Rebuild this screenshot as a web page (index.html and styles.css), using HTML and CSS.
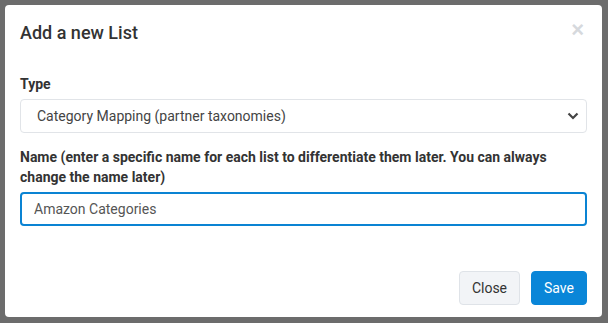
FILE: index.html
```html
<!DOCTYPE html>
<html>

<head>
    <meta charset="UTF-8">
    <meta name="viewport" content="width=device-width, initial-scale=1.0">
    <title>Add a new List</title>
    <link rel="stylesheet" href="styles.css">
</head>

<body>
    <div class="modal">
        <div class="modal-header">
            <h2>Add a new List</h2>
            <button class="close-x">&times;</button>
        </div>
        <div class="modal-body">
            <label for="type">Type</label>
            <div class="select-wrap">
                <select id="type">
                    <option>Category Mapping (partner taxonomies)</option>
                </select>
                <svg class="chevron" width="12" height="8" viewBox="0 0 12 8">
                    <path d="M1.5 1.5 L6 6 L10.5 1.5" fill="none" stroke="#444" stroke-width="2.2" />
                </svg>
            </div>
            <label for="name">Name (enter a specific name for each list to differentiate them later. You can always change the name later)</label>
            <input type="text" id="name" value="Amazon Categories">
        </div>
        <div class="modal-footer">
            <button class="btn btn-light">Close</button>
            <button class="btn btn-primary">Save</button>
        </div>
    </div>
</body>

</html>
```

FILE: styles.css
```css
body {
    margin: 0;
    padding: 5px;
    height: 323px;
    box-sizing: border-box;
    background-color: #6c6c6c;
    font-family: Roboto, "Liberation Sans", sans-serif;
}

.modal {
    width: 597px;
    height: 312px;
    box-sizing: border-box;
    background-color: white;
    border-radius: 4px;
    display: flex;
    flex-direction: column;
}

.modal-header {
    display: flex;
    justify-content: space-between;
    align-items: flex-start;
    padding: 16px 15px;
}

.modal-header h2 {
    margin: 0;
    font-size: 18px;
    font-weight: 500;
    line-height: 24px;
    color: #333;
}

.close-x {
    border: none;
    background: none;
    padding: 0;
    margin-top: -2px;
    margin-right: 3px;
    font-size: 22px;
    font-weight: bold;
    line-height: 22px;
    color: #d6d9dd;
    font-family: "Liberation Sans", sans-serif;
}

.modal-body {
    padding: 13px 15px 0;
    flex: 1;
    display: flex;
    flex-direction: column;
}

.modal-body label {
    font-size: 14px;
    font-weight: 700;
    line-height: 20px;
    color: #333;
    margin-bottom: 5px;
}

.select-wrap {
    position: relative;
    margin-bottom: 14px;
}

select {
    width: 100%;
    height: 34px;
    appearance: none;
    border: 1px solid #e1e4e8;
    border-radius: 4px;
    background-color: white;
    padding: 0 16px;
    font-family: Roboto, "Liberation Sans", sans-serif;
    font-size: 14px;
    color: #444;
}

.chevron {
    position: absolute;
    right: 8px;
    top: 13px;
}

input {
    height: 34px;
    box-sizing: border-box;
    border: 2px solid #0a83d3;
    border-radius: 4px;
    padding: 0 12px;
    font-family: Roboto, "Liberation Sans", sans-serif;
    font-size: 14px;
    color: #555;
    outline: none;
}

.modal-footer {
    display: flex;
    justify-content: flex-end;
    gap: 11px;
    padding: 0 15px 12px;
}

.btn {
    height: 34px;
    padding: 0 12px;
    border-radius: 4px;
    font-family: Roboto, "Liberation Sans", sans-serif;
    font-size: 14px;
    cursor: pointer;
}

.btn-light {
    background-color: #f2f4f7;
    border: 1px solid #dfe3e8;
    color: #333;
}

.btn-primary {
    background-color: #0a86d8;
    border: 1px solid #0a86d8;
    color: white;
}
```
